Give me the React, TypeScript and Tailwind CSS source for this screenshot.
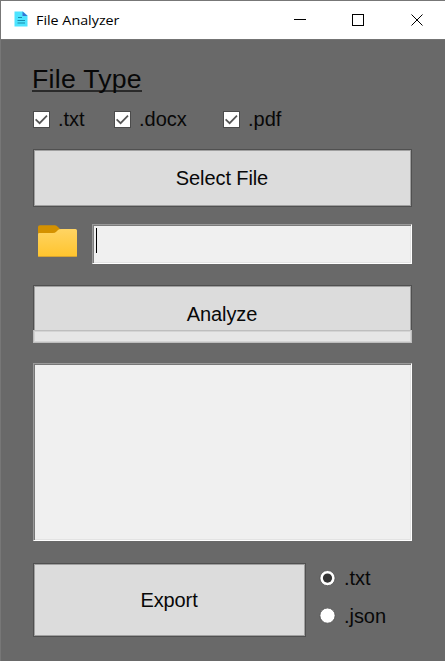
import React from "react";

function CheckOption({ label, className }: { label: string; className: string }) {
  return (
    <label className={`flex items-center ${className}`}>
      <svg width="17" height="17" viewBox="0 0 17 17" className="shrink-0">
        <rect x="0.5" y="0.5" width="16" height="16" fill="#fff" stroke="#4b4b4b" />
        <path d="M2.6 8.3 6.6 12.2 14 4.6" fill="none" stroke="#555" strokeWidth="1.7" />
      </svg>
      <span className="-mt-px ml-[8px] text-[20px] leading-[24px]">{label}</span>
    </label>
  );
}

function RadioOption({ label, checked }: { label: string; checked?: boolean }) {
  return (
    <label className="flex h-[24px] items-center">
      <svg width="17" height="17" viewBox="0 0 17 17" className="shrink-0">
        <circle cx="8.5" cy={checked ? 8.1 : 7.6} r="7.6" fill="#fff" stroke="#4f4f4f" strokeWidth="0.8" />
        {checked && <circle cx="8.5" cy="8.1" r="4.6" fill="#333" />}
      </svg>
      <span className="ml-[8px] text-[20px] leading-[24px] tracking-[-0.05px]">{label}</span>
    </label>
  );
}

function PushButton({ label, className }: { label: string; className: string }) {
  return (
    <button
      className={`flex items-center justify-center border border-[#505050] bg-[#dcdcdc] pr-px text-[20px] leading-[24px] tracking-[-0.1px] shadow-[inset_0_0_0_1px_#a0a0a0] ${className}`}
    >
      {label}
    </button>
  );
}

function TitleBar() {
  return (
    <header className="flex h-[38px] items-center bg-white pl-[13px]">
      <svg width="14" height="16" viewBox="0 0 14 16" className="-mt-[2px]">
        <path d="M0.5 0.5H9L13.5 4.5V15.5H0.5Z" fill="#4de4ff" />
        <path d="M8.5 0.5 13.5 5H8.5Z" fill="#3475d5" />
        <path d="M4 6.5H8M3.5 9.5H11M3.5 12H11" stroke="#168bad" strokeWidth="1.2" />
      </svg>
      <h1 className="ml-[8px] w-[100px] whitespace-nowrap font-['Open_Sans','Noto_Sans',sans-serif] text-[13px] leading-[16px]">
        <span className="inline-block origin-left scale-x-[1.1] text-[#000]">File Analyzer</span>
      </h1>
      <svg width="136" height="14" viewBox="0 0 136 14" className="ml-[156px]" fill="none" stroke="#000" shapeRendering="crispEdges">
        <path d="M2 6.5H14" />
        <rect x="60.5" y="1.5" width="11" height="11" />
        <path d="M119.5 1.5 130.5 12.5M130.5 1.5 119.5 12.5" shapeRendering="auto" />
      </svg>
    </header>
  );
}

export default function App() {
  return (
    <div className="flex h-[661px] w-[445px] flex-col overflow-hidden border-l border-t border-[#777] bg-[#696969] font-['Liberation_Sans',Arial,sans-serif] text-[#080808]">
      <TitleBar />
      <main className="flex grow flex-col border-t border-[#747474] pl-[32px]">
        <h2 className="mt-[23px] h-[32px] text-[26.67px] leading-[32px]">
          <span className="-ml-px inline-block h-[29px] border-b-2 border-[#2a2a2a] tracking-[0.25px]">File Type</span>
        </h2>
        <div className="mt-[12px] flex h-[25px] items-center">
          <CheckOption label=".txt" className="w-[81px]" />
          <CheckOption label=".docx" className="w-[109px]" />
          <CheckOption label=".pdf" className="w-[80px]" />
        </div>
        <PushButton label="Select File" className="mt-[17px] h-[58px] w-[379px]" />
        <div className="mt-[17px] flex h-[41px]">
          <svg width="59" height="41" viewBox="0 0 59 41">
            <defs>
              <linearGradient id="folder" x1="0" y1="0" x2="0" y2="1">
                <stop stopColor="#ffd463" />
                <stop offset="1" stopColor="#ffc42d" />
              </linearGradient>
            </defs>
            <path d="M5 3Q5 1.2 7 1.2H22Q23.5 1.2 25 3L28 6H5Z" fill="#d49100" />
            <path d="M5 4H26V9H5Z" fill="#d49100" />
            <path d="M5 10Q5 9 6 9H20Q22 9 23.5 7.5L25 6Q26 5 28 5H42.5Q44 5 44 6.5V31.5Q44 33 42.5 33H6.5Q5 33 5 31.5Z" fill="url(#folder)" />
            <path d="M5.5 32.5H43.5" stroke="#d6a332" />
          </svg>
          <div className="h-[40px] w-[320px] border border-b-white border-l-[#9a9a9a] border-r-white border-t-[#9a9a9a] bg-[#f0f0f0] pl-[3px] pt-[3px] shadow-[inset_1px_1px_0_#7b7b7b,inset_-1px_-1px_0_#e3e3e3]">
            <div className="h-[25px] w-px bg-black" />
          </div>
        </div>
        <div className="mt-[20px] h-[58px] w-[379px]">
          <PushButton label="Analyze" className="h-[58px] w-[379px]" />
          <div className="relative -mt-[13px] h-[13px] border border-[#bebebe] bg-[#e6e6e6] shadow-[inset_0_0_0_1px_#d4d4d4]" />
        </div>
        <div className="mt-[20px] h-[178px] w-[379px] shrink-0 border border-b-white border-l-[#9a9a9a] border-r-white border-t-[#9a9a9a] bg-[#f0f0f0] shadow-[inset_1px_1px_0_#777,inset_-1px_-1px_0_#e3e3e3]" />
        <div className="mt-[22px] flex">
          <PushButton label="Export" className="h-[74px] w-[273px]" />
          <div className="ml-[13px] flex flex-col gap-[14px] pt-[3px]">
            <RadioOption label=".txt" checked />
            <RadioOption label=".json" />
          </div>
        </div>
      </main>
    </div>
  );
}
